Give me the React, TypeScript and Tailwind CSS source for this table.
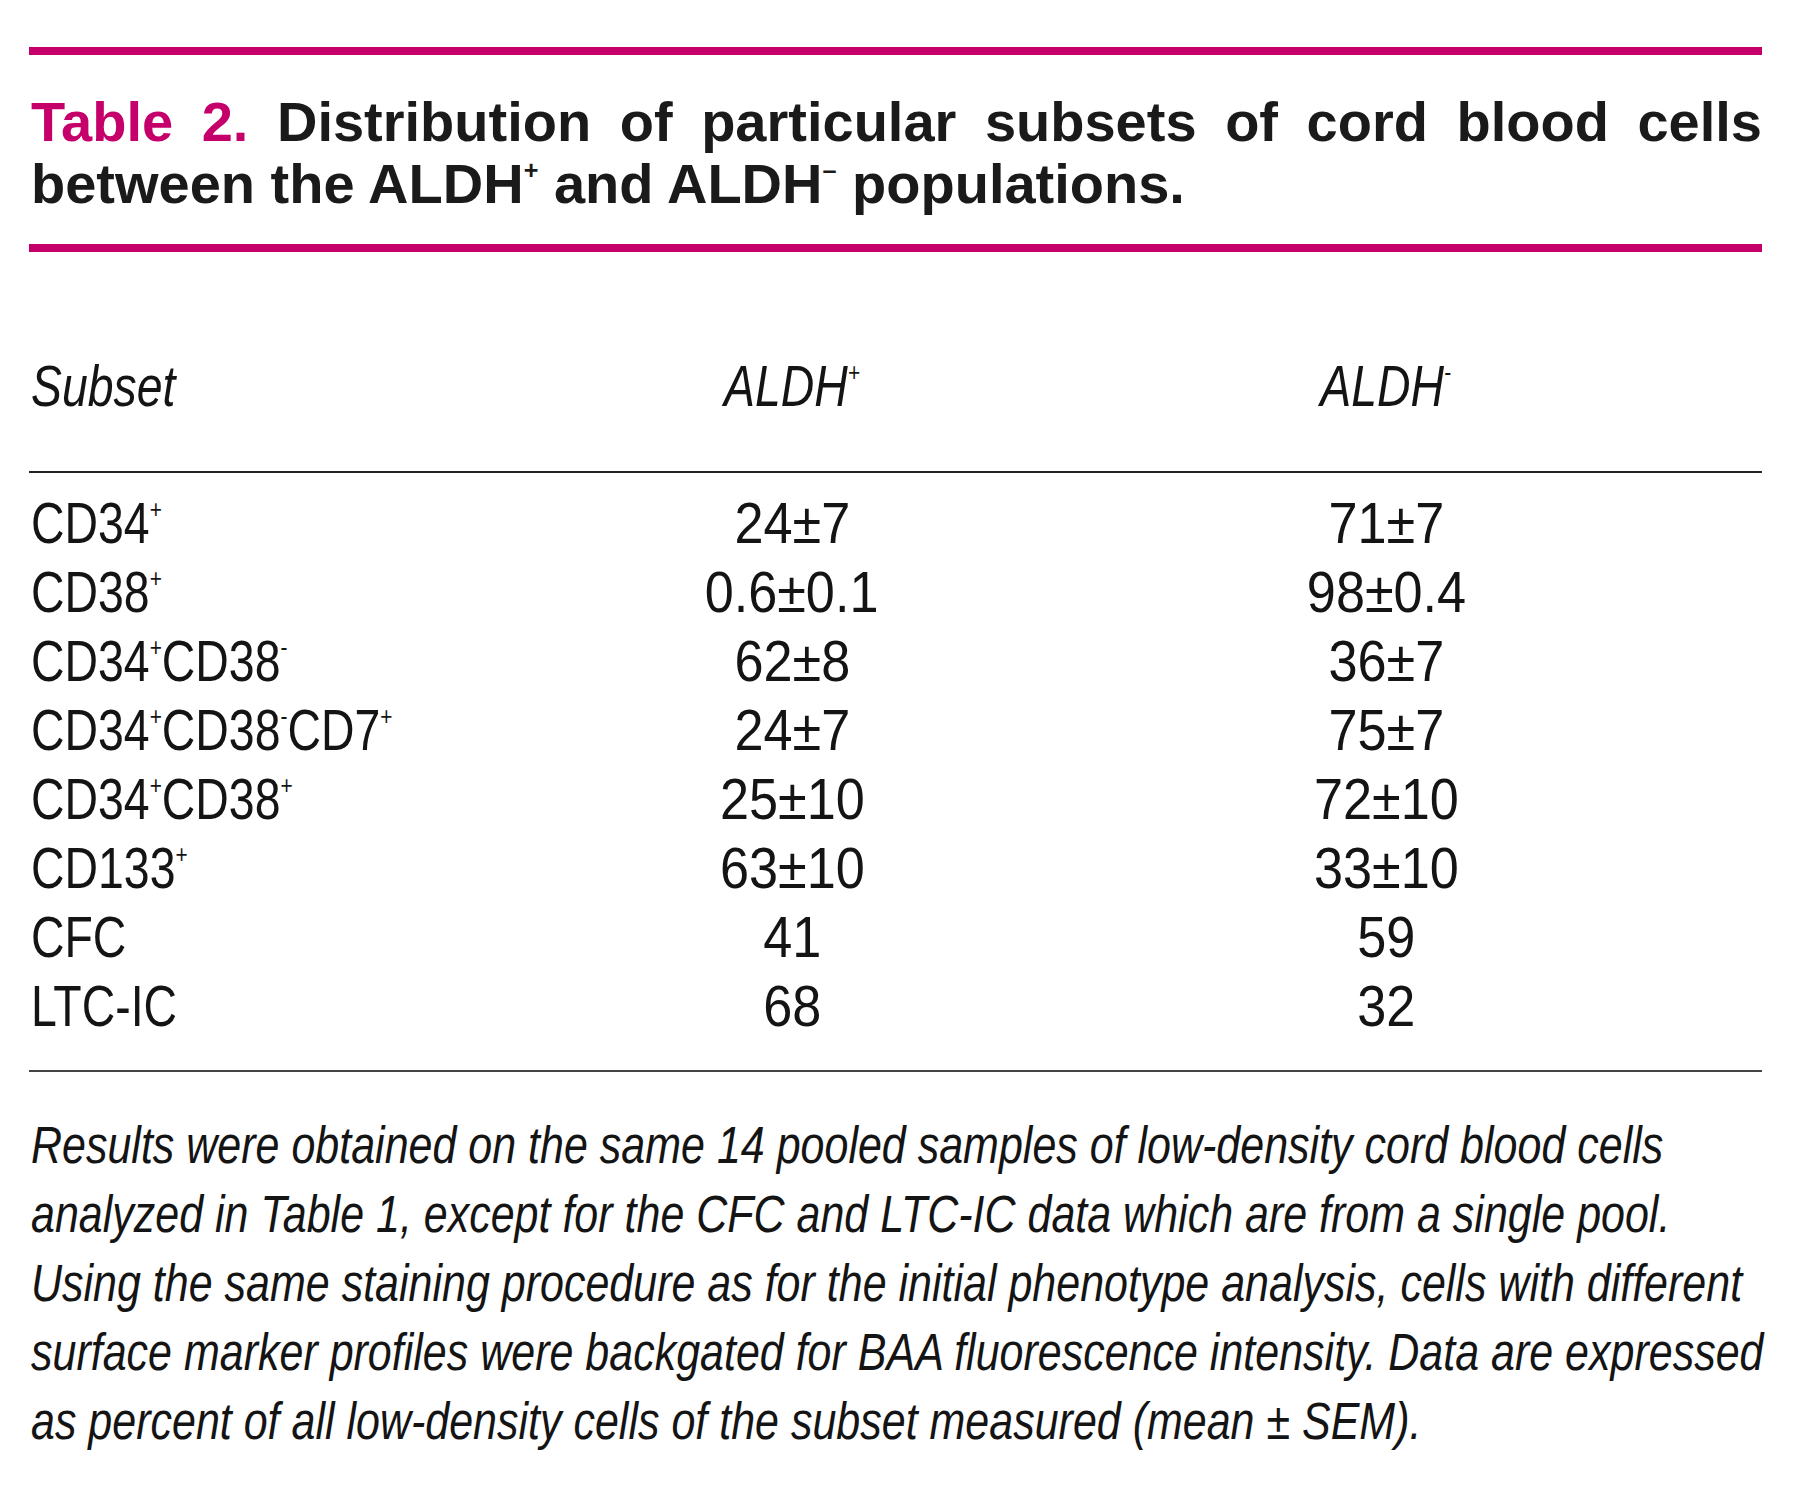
const rows: { label: React.ReactNode; pos: string; neg: string }[] = [
  { label: <>CD34<Sup>+</Sup></>, pos: "24±7", neg: "71±7" },
  { label: <>CD38<Sup>+</Sup></>, pos: "0.6±0.1", neg: "98±0.4" },
  { label: <>CD34<Sup>+</Sup>CD38<Sup>-</Sup></>, pos: "62±8", neg: "36±7" },
  { label: <>CD34<Sup>+</Sup>CD38<Sup>-</Sup>CD7<Sup>+</Sup></>, pos: "24±7", neg: "75±7" },
  { label: <>CD34<Sup>+</Sup>CD38<Sup>+</Sup></>, pos: "25±10", neg: "72±10" },
  { label: <>CD133<Sup>+</Sup></>, pos: "63±10", neg: "33±10" },
  { label: "CFC", pos: "41", neg: "59" },
  { label: "LTC-IC", pos: "68", neg: "32" },
];

const note = [
  "Results were obtained on the same 14 pooled samples of low-density cord blood cells",
  "analyzed in Table 1, except for the CFC and LTC-IC data which are from a single pool.",
  "Using the same staining procedure as for the initial phenotype analysis, cells with different",
  "surface marker profiles were backgated for BAA fluorescence intensity. Data are expressed",
  "as percent of all low-density cells of the subset measured (mean ± SEM).",
];

function Sup({ children }: { children: React.ReactNode }) {
  return (
    <sup className="text-[0.45em] top-[-0.95em] leading-none">{children}</sup>
  );
}

// condensed look: no narrow face is installed, so squeeze Liberation Sans
function Narrow({ children }: { children: React.ReactNode }) {
  return (
    <span className="inline-block whitespace-nowrap scale-x-[0.8] origin-left">
      {children}
    </span>
  );
}

function Num({ children }: { children: React.ReactNode }) {
  return (
    <span className="inline-block whitespace-nowrap scale-x-[0.9] origin-center">
      {children}
    </span>
  );
}

export default function App() {
  return (
    <div className="w-[1800px] h-[1501px] overflow-hidden bg-white pt-[47px] pl-[29px] text-[#141414] font-['Liberation_Sans',Arial,sans-serif]">
      <div className="w-[1733px]">
        <div className="h-[8px] bg-[#c6006b]" />

        <h1 className="mt-[36px] pl-[2px] text-justify font-bold text-[56px] leading-[62px] text-[#1a1a1a]">
          <span className="text-[#c6006b]">Table 2.</span> Distribution of
          particular subsets of cord blood cells between the ALDH
          <Sup>+</Sup> and ALDH<Sup>–</Sup> populations.
        </h1>

        <div className="mt-[29px] h-[8px] bg-[#c6006b]" />

        <div className="text-[58px] leading-[69px]">
          <div className="mt-[99px] pb-[51px] pl-[2px] grid grid-cols-[464px_594px_594px] italic border-b-2 border-[#222]">
            <div>
              <Narrow>Subset</Narrow>
            </div>
            <div className="text-center">
              <span className="inline-block whitespace-nowrap scale-x-[0.8] origin-center">
                ALDH<Sup>+</Sup>
              </span>
            </div>
            <div className="text-center">
              <span className="inline-block whitespace-nowrap scale-x-[0.8] origin-center">
                ALDH<Sup>-</Sup>
              </span>
            </div>
          </div>

          <div className="pt-[15px] pb-[30px] pl-[2px] border-b-2 border-[#444]">
            {rows.map((r, i) => (
              <div key={i} className="grid grid-cols-[464px_594px_594px]">
                <div>
                  <Narrow>{r.label}</Narrow>
                </div>
                <div className="text-center">
                  <Num>{r.pos}</Num>
                </div>
                <div className="text-center">
                  <Num>{r.neg}</Num>
                </div>
              </div>
            ))}
          </div>

          <div className="mt-[39px] ml-[2px] w-[2050px] origin-left scale-x-[0.843] italic text-[51px] leading-[69px]">
            {note.map((line, i) => (
              <div key={i} className="whitespace-nowrap">
                {line}
              </div>
            ))}
          </div>
        </div>
      </div>
    </div>
  );
}
